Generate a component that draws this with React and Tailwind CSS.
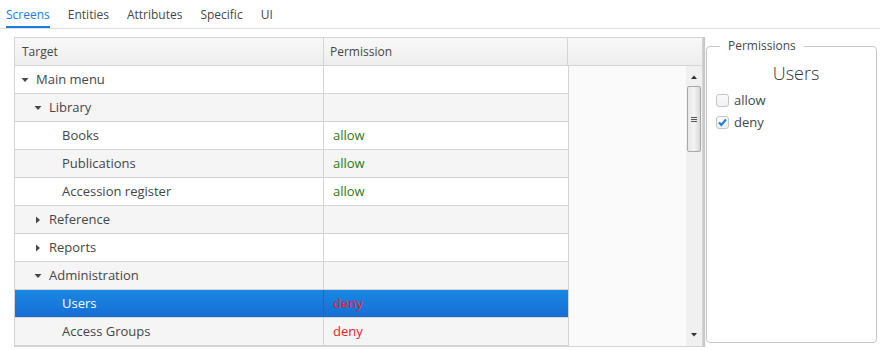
import React from "react";

const rows = [
  { label: "Main menu", level: 0, arrow: "down", perm: "" },
  { label: "Library", level: 1, arrow: "down", perm: "" },
  { label: "Books", level: 2, arrow: null, perm: "allow" },
  { label: "Publications", level: 2, arrow: null, perm: "allow" },
  { label: "Accession register", level: 2, arrow: null, perm: "allow" },
  { label: "Reference", level: 1, arrow: "right", perm: "" },
  { label: "Reports", level: 1, arrow: "right", perm: "" },
  { label: "Administration", level: 1, arrow: "down", perm: "" },
  { label: "Users", level: 2, arrow: null, perm: "deny", selected: true },
  { label: "Access Groups", level: 2, arrow: null, perm: "deny" },
];

const pad = ["pl-[6px]", "pl-[19px]", "pl-[32px]"];

function Arrow({ dir }) {
  if (dir === "down")
    return (
      <svg width="15" height="8" viewBox="0 0 15 8" className="shrink-0">
        <path d="M0.5 2h7L4 6z" fill="#474747" />
      </svg>
    );
  if (dir === "right")
    return (
      <svg width="15" height="10" viewBox="0 0 15 10" className="shrink-0">
        <path d="M2 1.5v7L6 5z" fill="#474747" />
      </svg>
    );
  return <span className="w-[15px] shrink-0" />;
}

function Row({ row, index }) {
  const bg = row.selected
    ? "bg-gradient-to-b from-[#1b87e3] to-[#166ed5] text-white"
    : index % 2 === 0
      ? "bg-white text-[#464646]"
      : "bg-[#f5f5f5] text-[#464646]";
  const permColor = row.perm === "allow" ? "text-[#2c7a16]" : "text-[#f01a2b]";
  return (
    <div className={`flex h-[28px] border-b border-[#d4d4d4] ${bg}`}>
      <div className={`flex w-[309px] items-center border-r ${row.selected ? "border-[#1d69b4]" : "border-[#d4d4d4]"} ${pad[row.level]}`}>
        <Arrow dir={row.arrow} />
        <span>{row.label}</span>
      </div>
      <div className={`flex w-[244px] items-center pl-[9px] ${permColor}`}>{row.perm}</div>
    </div>
  );
}

export default function App() {
  const tabs = ["Screens", "Entities", "Attributes", "Specific", "UI"];
  return (
    <div className="h-[350px] w-[880px] overflow-hidden bg-white text-[13px] text-[#464646]" style={{ fontFamily: '"Open Sans", sans-serif' }}>
      <div className="flex h-[29px] items-end border-b border-[#dfdfdf] pl-[6px]">
        {tabs.map((t, i) => (
          <div
            key={t}
            className={`mr-[18px] flex h-[28px] items-center border-b-2 pt-[3px] text-[12px] ${i === 0 ? "border-[#197de1] text-[#197de1]" : "border-transparent text-[#474747]"}`}
          >
            {t}
          </div>
        ))}
      </div>

      <div className="flex pl-[14px] pt-[8px]">
        <div className="flex w-[689px] flex-col border border-[#d4d4d4]">
          <div className="flex h-[28px] border-b border-[#d4d4d4] bg-gradient-to-b from-[#f8f8f8] to-[#eeeeee] text-[12px]">
            <div className="flex w-[309px] items-center border-r border-[#d4d4d4] pl-[7px]">Target</div>
            <div className="flex w-[244px] items-center border-r border-[#d4d4d4] pl-[6px]">Permission</div>
            <div className="flex-1" />
          </div>
          <div className="flex">
            <div className="flex w-[553px] flex-col">
              {rows.map((r, i) => (
                <Row key={r.label} row={r} index={i} />
              ))}
            </div>
            <div className="flex-1 border-l border-[#d4d4d4] bg-[#fafafa]" />
            <div className="flex w-[16px] flex-col items-center bg-[#f0f0f0]">
              <svg width="16" height="16" viewBox="0 0 16 16" className="mt-[3px]">
                <path d="M5 10h6L8 6.5z" fill="#333" />
              </svg>
              <div className="mt-[1px] flex h-[66px] w-[14px] items-center justify-center rounded-[2px] border border-[#a8a8a8] bg-gradient-to-r from-[#e8e8e8] via-[#f4f4f4] to-[#d8d8d8]">
                <div className="flex flex-col gap-[1px]">
                  <div className="h-[1px] w-[6px] bg-[#555]" />
                  <div className="h-[1px] w-[6px] bg-[#555]" />
                  <div className="h-[1px] w-[6px] bg-[#555]" />
                </div>
              </div>
              <div className="flex-1" />
              <svg width="16" height="16" viewBox="0 0 16 16" className="mb-[3px]">
                <path d="M5 6h6L8 9.5z" fill="#333" />
              </svg>
            </div>
          </div>
        </div>

        <div className="w-[3px] border-l-2 border-[#c9c9c9] bg-[#f5f5f5]" />

        <fieldset className="h-[306px] w-[171px] rounded-[4px] border border-[#c5c5c5] pl-[9px]">
          <legend className="ml-[4px] px-[8px] text-[12px] text-[#474747]">Permissions</legend>
          <div className="mt-[5px] text-center text-[18px] font-light text-[#333]">Users</div>
          <label className="mt-[4px] flex items-center gap-[5px] leading-[19px]">
            <span className="h-[13px] w-[13px] rounded-[3px] border border-[#c5c5c5] bg-gradient-to-b from-[#fafafa] to-[#efefef]" />
            <span>allow</span>
          </label>
          <label className="mt-[3px] flex items-center gap-[5px] leading-[19px]">
            <span className="flex h-[13px] w-[13px] items-center justify-center rounded-[3px] border border-[#c5c5c5] bg-gradient-to-b from-[#fafafa] to-[#efefef]">
              <svg width="11" height="11" viewBox="0 0 11 11">
                <path d="M2 5.5l2.3 2.5L9 2.5" stroke="#197de1" strokeWidth="2" fill="none" />
              </svg>
            </span>
            <span>deny</span>
          </label>
        </fieldset>
      </div>
    </div>
  );
}
